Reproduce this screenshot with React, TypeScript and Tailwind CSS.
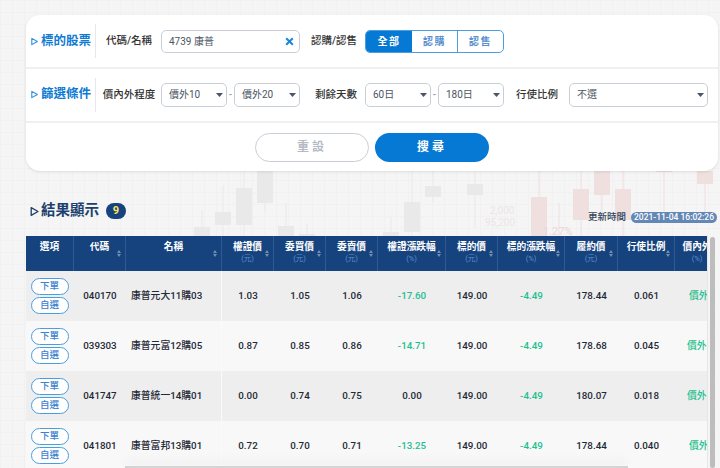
import React from "react";

const font = "font-['Roboto','Noto_Sans_CJK_TC',sans-serif]";

function Caret() {
  return (
    <svg width="7" height="4" viewBox="0 0 7 4" className="shrink-0">
      <path d="M0 0h7L3.5 4z" fill="#4a5568" />
    </svg>
  );
}

function Select({ text, w }: { text: string; w: string }) {
  return (
    <div className={`${w} h-[24px] shrink-0 rounded-[5px] border border-[#c9ced6] bg-white pl-[7px] pr-[3px] flex items-center justify-between text-[10px] font-normal text-[#4b5563]`}>
      <span>{text}</span>
      <Caret />
    </div>
  );
}

function Arrow({ color, size = 10 }: { color: string; size?: number }) {
  return (
    <svg width={size} height={size} viewBox="0 0 10 10" className="shrink-0">
      <path d="M2 1.5 8.2 5 2 8.5z" fill="none" stroke={color} strokeWidth="1.2" strokeLinejoin="round" />
    </svg>
  );
}

function SectionLabel({ text }: { text: string }) {
  return (
    <div className="w-[66px] h-[34px] ml-[4px] shrink-0 flex items-center border-r border-[#e5e7eb] text-[#0f7bd3] text-[12.5px] font-bold whitespace-nowrap">
      <Arrow color="#2b8fe0" size={9} />
      <span className="ml-[2px]">{text}</span>
    </div>
  );
}

function Sort() {
  return (
    <svg width="4" height="7" viewBox="0 0 4 7" className="absolute right-[4px] top-[14px]">
      <path d="M2 0 4 3H0zM2 7 0 4h4z" fill="#6f8fb4" />
    </svg>
  );
}

const cols = "grid-cols-[48px_52px_96px_52px_52px_52px_68px_52px_67px_53px_57px_45px]";

const headers: [string, string | null][] = [
  ["選項", null],
  ["代碼", null],
  ["名稱", null],
  ["權證價", "(元)"],
  ["委買價", "(元)"],
  ["委賣價", "(元)"],
  ["權證漲跌幅", "(%)"],
  ["標的價", "(元)"],
  ["標的漲跌幅", "(%)"],
  ["履約價", "(元)"],
  ["行使比例", null],
  ["價內外", "(%)"],
];

const rows = [
  ["040170", "康普元大11購03", "1.03", "1.05", "1.06", "-17.60", "149.00", "-4.49", "178.44", "0.061", "ml-[14px]"],
  ["039303", "康普元富12購05", "0.87", "0.85", "0.86", "-14.71", "149.00", "-4.49", "178.68", "0.045", "ml-[12px]"],
  ["041747", "康普統一14購01", "0.00", "0.74", "0.75", "0.00", "149.00", "-4.49", "180.07", "0.018", "ml-[12px]"],
  ["041801", "康普富邦13購01", "0.72", "0.70", "0.71", "-13.25", "149.00", "-4.49", "178.44", "0.040", "ml-[14px]"],
];

function Background() {
  // x, body top, body bottom, wick top, wick bottom, red
  const candles: [number, number, number, number, number, number][] = [
    [194, 227, 240, 210, 240, 0],
    [215, 212, 225, 185, 240, 0],
    [236, 188, 225, 171, 240, 0],
    [257, 171, 203, 171, 212, 0],
    [278, 226, 240, 203, 240, 0],
    [299, 234, 240, 224, 240, 0],
    [383, 232, 240, 217, 240, 0],
    [404, 202, 232, 171, 240, 0],
    [425, 186, 197, 171, 203, 0],
    [467, 184, 195, 171, 228, 0],
    [531, 197, 240, 171, 240, 1],
    [551, 236, 240, 203, 240, 1],
    [573, 189, 220, 171, 240, 1],
    [594, 171, 195, 171, 222, 1],
    [615, 189, 220, 171, 240, 1],
    [656, 171, 172, 171, 215, 1],
    [697, 171, 184, 171, 220, 1],
  ];
  return (
    <svg className="absolute left-0 top-0" width="720" height="468">
      <defs>
        <pattern id="g" width="12" height="12" patternUnits="userSpaceOnUse">
          <path d="M12 0H0V12" fill="none" stroke="#eeeeee" strokeWidth="1" />
        </pattern>
      </defs>
      <rect width="720" height="468" fill="#f5f5f5" />
      <rect width="720" height="468" fill="url(#g)" />
      {candles.map(([x, t, b, wt, wb, red], i) => (
        <g key={i} fill={red ? "#efdfdf" : "#e9e9e9"}>
          <rect x={x + 7.5} y={wt} width="1" height={wb - wt} />
          <rect x={x} y={t} width="16" height={b - t} />
        </g>
      ))}
      <g fontFamily="Roboto, sans-serif">
        <text x="490" y="214" fontSize="10" fill="#ebe6e6">2,000</text>
        <text x="485" y="226" fontSize="10" fill="#ebe6e6">95,200</text>
        <text x="543" y="235" fontSize="11" fill="#ead6d6">1.27%</text>
      </g>
    </svg>
  );
}

export default function App() {
  return (
    <div className={`relative w-[720px] h-[468px] overflow-hidden ${font}`}>
      <Background />
      <div className="relative pl-[26px] pr-[2px] pt-[15px]">
        <div className="rounded-[14px] bg-white h-[156px] flex flex-col shadow-[0_1px_3px_rgba(0,0,0,0.1)]">
          <div className="h-[54px] flex items-center border-b-2 border-[#f0f0f0] text-[10.5px] font-medium text-[#333]">
            <SectionLabel text="標的股票" />
            <div className="w-[65px] pl-[1px] text-center whitespace-nowrap">代碼/名稱</div>
            <div className="w-[139px] h-[23px] rounded-[5px] border border-[#c9ced6] flex items-center justify-between pl-[7px] pr-[5px] text-[10px] font-normal text-[#4b5563]">
              <span>4739 康普</span>
              <svg width="9" height="9" viewBox="0 0 9 9"><path d="M1.2 1.2 7.8 7.8M7.8 1.2 1.2 7.8" stroke="#1a86dc" strokeWidth="2" /></svg>
            </div>
            <div className="w-[65px] pl-[3px] text-center whitespace-nowrap">認購/認售</div>
            <div className="w-[139px] h-[23px] rounded-[5px] border border-[#4a9ee0] flex text-[10px] font-bold tracking-[1.5px] overflow-hidden">
              <div className="w-[46px] bg-[#0679d4] text-white flex items-center justify-center">全部</div>
              <div className="w-[46px] text-[#5b8fd0] flex items-center justify-center border-r border-[#4a9ee0]">認購</div>
              <div className="flex-1 text-[#5b8fd0] flex items-center justify-center">認售</div>
            </div>
          </div>
          <div className="h-[54px] pb-[1px] flex items-center border-b-2 border-[#f0f0f0] text-[10.5px] text-[#333] font-medium">
            <SectionLabel text="篩選條件" />
            <div className="w-[65px] pl-[1px] text-center whitespace-nowrap">價內外程度</div>
            <Select text="價外10" w="w-[66px]" />
            <span className="w-[7px] text-center text-[#9ca3af] text-[10px]">-</span>
            <Select text="價外20" w="w-[66px]" />
            <div className="w-[65px] pl-[7px] text-center">剩餘天數</div>
            <Select text="60日" w="w-[66px]" />
            <span className="w-[7px] text-center text-[#9ca3af] text-[10px]">-</span>
            <Select text="180日" w="w-[66px]" />
            <div className="w-[65px] pl-[1px] text-center">行使比例</div>
            <Select text="不選" w="w-[139px]" />
          </div>
          <div className="flex-1 flex items-center justify-center gap-[6px] text-[12px] font-bold tracking-[3px]">
            <div className="w-[114px] h-[29px] rounded-full border border-[#c9ced6] text-[#b5bac2] flex items-center justify-center">重設</div>
            <div className="w-[114px] h-[29px] rounded-full bg-[#0679d4] text-white flex items-center justify-center">搜尋</div>
          </div>
        </div>

        <div className="h-[65px] flex items-start justify-between">
          <div className="flex items-center mt-[29px] ml-[3px] text-[#1c3f6e] text-[14.5px] leading-[22px] font-bold">
            <Arrow color="#1c3f6e" size={11} />
            <span className="ml-[1px]">結果顯示</span>
            <span className="ml-[7px] w-[20px] h-[16px] rounded-full bg-[#16437e] text-[#ffe45c] text-[11px] flex items-center justify-center">9</span>
          </div>
          <div className="flex items-center mt-[39px] mr-[1px] text-[9.5px] text-[#33435a]">
            <span className="mr-[5px] font-medium">更新時間</span>
            <span className="h-[11px] px-[3px] rounded-full bg-[#6388b5] text-white text-[8.5px] font-medium flex items-center">2021-11-04 16:02:26</span>
          </div>
        </div>

        <div className="w-[681px] overflow-hidden">
          <div className={`grid ${cols} w-[714px] h-[35px] bg-[#16437e] text-white text-[9.7px] font-bold`}>
            {headers.map(([h, u], i) => (
              <div key={h} className="relative flex flex-col items-center pt-[4px] leading-[14px] border-r border-[#2d5a92] whitespace-nowrap">
                <span>{h}</span>
                {u && <span className="text-[7.5px] leading-[10px] font-normal text-[#5d8fca]">{u}</span>}
                {i > 0 && i < 11 && <Sort />}
              </div>
            ))}
          </div>
          {rows.map((r, i) => (
            <div key={r[0]} className={`grid ${cols} w-[714px] h-[50px] items-center text-[9.8px] font-medium text-[#1f2937] text-center ${i % 2 ? "bg-[#f8f8f8]" : "bg-[#eeeeee]"}`}>
              <div className="flex flex-col items-center gap-[2px] pr-[1px]">
                {["下單", "自選"].map((t) => (
                  <div key={t} className="w-[38px] h-[17px] rounded-full border border-[#4a9ee0] bg-white text-[#3b82d0] text-[9.5px] flex items-center justify-center">{t}</div>
                ))}
              </div>
              <div>{r[0]}</div>
              <div className="self-stretch flex items-center pl-[5px] whitespace-nowrap border-r border-[#fafafa]">{r[1]}</div>
              <div>{r[2]}</div>
              <div>{r[3]}</div>
              <div>{r[4]}</div>
              <div className={r[5].startsWith("-") ? "text-[#1fbf8f]" : ""}>{r[5]}</div>
              <div>{r[6]}</div>
              <div className="text-[#1fbf8f]">{r[7]}</div>
              <div>{r[8]}</div>
              <div>{r[9]}</div>
              <div className={`text-left text-[#1fbf8f] whitespace-nowrap ${r[10]}`}>價外</div>
            </div>
          ))}
        </div>
      </div>
      <div className="absolute left-[707px] top-[235px] w-[11px] h-[233px] bg-[#f5f5f5] border-l border-[#e6e6e6]">
        <div className="ml-[2px] mt-[2px] w-[5px] h-[231px] rounded-full bg-[#bdbdbd]" />
      </div>
      <div className="absolute left-[125px] top-[466px] w-[503px] h-[2px] bg-[#d4d4d4] shadow-[0_-5px_10px_rgba(0,0,0,0.1)]" />
    </div>
  );
}
